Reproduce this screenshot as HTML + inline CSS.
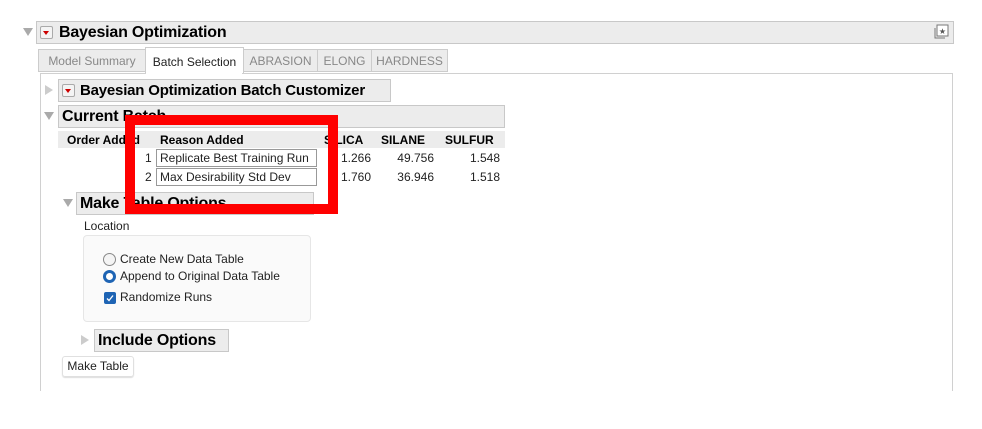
<!DOCTYPE html>
<html><head><style>
body{margin:0;width:982px;height:429px;background:#fff;font-family:"Liberation Sans",sans-serif;position:relative;overflow:hidden;color:#222}
.a{position:absolute;white-space:nowrap}
.bar{position:absolute;background:#ececec;border:1px solid #c8c8c8;box-sizing:border-box;font-weight:bold;color:#000;white-space:nowrap;letter-spacing:-0.2px}
.tri{position:absolute;width:0;height:0}
.dn{border-left:5px solid transparent;border-right:5px solid transparent;border-top:8px solid #aaa}
.rt{border-top:5px solid transparent;border-bottom:5px solid transparent;border-left:8px solid #ccc}
.rb{position:absolute;width:13px;height:13px;border:1px solid #aaa;border-radius:2px;background:#f4f4f4;box-sizing:border-box}
.rb:after{content:"";position:absolute;left:2px;top:4px;border-left:3.5px solid transparent;border-right:3.5px solid transparent;border-top:4px solid #c00}
.tab{position:absolute;top:49px;height:23px;background:#ececec;border:1px solid #ccc;box-sizing:border-box;font-size:12px;color:#888;line-height:22px;text-align:center}
.t12{font-size:12px}
</style></head><body>
<div class="tri dn" style="left:23px;top:28px"></div>
<div class="bar" style="left:36px;top:21px;width:918px;height:23px;font-size:16px;line-height:21px;padding-left:22px">Bayesian Optimization</div>
<div class="rb" style="left:40px;top:26px"></div>
<svg class="a" style="left:932px;top:23px" width="18" height="18"><rect x="5" y="2" width="11" height="11" fill="#fff" stroke="#777"/><path d="M3 5v10h10" fill="none" stroke="#777"/><text x="10.5" y="11" font-size="8" text-anchor="middle" fill="#555">★</text></svg>
<div class="tab" style="left:38px;width:108px">Model Summary</div>
<div class="tab" style="left:145px;width:99px;top:47px;height:27px;background:#fff;color:#222;border-bottom:none;line-height:28px">Batch Selection</div>
<div class="tab" style="left:243px;width:75px">ABRASION</div>
<div class="tab" style="left:317px;width:55px">ELONG</div>
<div class="tab" style="left:371px;width:77px">HARDNESS</div>
<div class="a" style="left:40px;top:73px;width:913px;height:318px;border:1px solid #d0d0d0;border-bottom:none;box-sizing:border-box"></div>
<div class="a" style="left:146px;top:72px;width:96px;height:3px;background:#fff"></div>
<div class="tri rt" style="left:45px;top:85px"></div>
<div class="bar" style="left:58px;top:79px;width:333px;height:23px;font-size:15px;line-height:21px;padding-left:21px">Bayesian Optimization Batch Customizer</div>
<div class="rb" style="left:62px;top:84px"></div>
<div class="tri dn" style="left:44px;top:112px"></div>
<div class="bar" style="left:58px;top:105px;width:447px;height:23px;font-size:16px;line-height:21px;padding-left:3px">Current Batch</div>
<div class="a" style="left:58px;top:131px;width:447px;height:17px;background:#ececec"></div>
<div class="a t12" style="left:67px;top:133px;font-weight:bold;color:#000">Order Added</div>
<div class="a t12" style="left:160px;top:133px;font-weight:bold;color:#000">Reason Added</div>
<div class="a t12" style="left:324px;top:133px;font-weight:bold;color:#000">SILICA</div>
<div class="a t12" style="left:381px;top:133px;font-weight:bold;color:#000">SILANE</div>
<div class="a t12" style="left:445px;top:133px;font-weight:bold;color:#000">SULFUR</div>
<div class="a t12" style="left:145px;top:151px">1</div>
<div class="a t12" style="left:145px;top:170px">2</div>
<div class="a t12" style="left:156px;top:149px;width:161px;height:18px;border:1px solid #999;box-sizing:border-box;padding:1px 3px">Replicate Best Training Run</div>
<div class="a t12" style="left:156px;top:168px;width:161px;height:18px;border:1px solid #999;box-sizing:border-box;padding:1px 3px">Max Desirability Std Dev</div>
<div class="a t12" style="left:300px;top:151px;width:71px;text-align:right">1.266</div>
<div class="a t12" style="left:360px;top:151px;width:74px;text-align:right">49.756</div>
<div class="a t12" style="left:440px;top:151px;width:60px;text-align:right">1.548</div>
<div class="a t12" style="left:300px;top:170px;width:71px;text-align:right">1.760</div>
<div class="a t12" style="left:360px;top:170px;width:74px;text-align:right">36.946</div>
<div class="a t12" style="left:440px;top:170px;width:60px;text-align:right">1.518</div>
<div class="tri dn" style="left:63px;top:199px"></div>
<div class="bar" style="left:76px;top:192px;width:238px;height:23px;font-size:16px;line-height:21px;padding-left:3px">Make Table Options</div>
<div class="a" style="left:125px;top:115px;width:213px;height:99px;border:10px solid #f00;box-sizing:border-box"></div>
<div class="a t12" style="left:84px;top:219px">Location</div>
<div class="a" style="left:83px;top:235px;width:228px;height:87px;border:1px solid #e6e6e6;border-radius:4px;background:#fafafa;box-sizing:border-box"></div>
<div class="a" style="left:103px;top:253px;width:11px;height:11px;border:1px solid #888;border-radius:50%;background:#f4f4f4"></div>
<div class="a t12" style="left:120px;top:252px">Create New Data Table</div>
<div class="a" style="left:103px;top:270px;width:7px;height:7px;border:3px solid #1e64b4;border-radius:50%;background:#fff"></div>
<div class="a t12" style="left:120px;top:269px">Append to Original Data Table</div>
<div class="a" style="left:104px;top:292px;width:12px;height:12px;border-radius:2px;background:#1e64b4"></div>
<svg class="a" style="left:104px;top:292px" width="12" height="12"><path d="M3 6.5l2 2l4-5" fill="none" stroke="#fff" stroke-width="1.3"/></svg>
<div class="a t12" style="left:120px;top:290px">Randomize Runs</div>
<div class="tri rt" style="left:81px;top:335px"></div>
<div class="bar" style="left:94px;top:329px;width:135px;height:23px;font-size:16px;line-height:21px;padding-left:3px">Include Options</div>
<div class="a t12" style="left:62px;top:356px;width:72px;height:21px;border:1px solid #e0e0e0;border-radius:3px;box-sizing:border-box;line-height:19px;text-align:center;box-shadow:0 1px 1px #ddd">Make Table</div>
</body></html>
